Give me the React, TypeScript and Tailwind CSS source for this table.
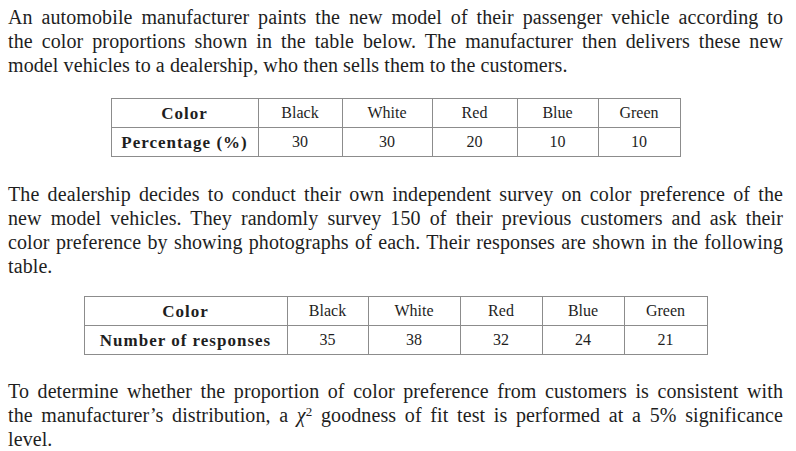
import React from 'react';

const FONT = "font-['Liberation_Serif','Times_New_Roman',serif]";

// one typeset line; every line but the last of a paragraph is stretched to the margin
const Line: React.FC<{ last?: boolean; children: React.ReactNode }> = ({ last, children }) => (
  <div className={last ? 'text-left' : 'text-justify [text-align-last:justify]'}>{children}</div>
);

interface TableProps {
  label: string;
  rowLabel: string;
  values: string[];
  widths: string[];
}

const colors = ['Black', 'White', 'Red', 'Blue', 'Green'];

const headCell = 'border border-[#8c8c8c] text-center font-bold text-[17px] tracking-[1px]';
const cell = 'border border-[#8c8c8c] text-center';

const DataTable: React.FC<TableProps> = ({ label, rowLabel, values, widths }) => (
  <table className="mx-auto border-collapse text-[16px] leading-none tracking-normal">
    <colgroup>
      {widths.map((w, i) => (
        <col key={i} className={w} />
      ))}
    </colgroup>
    <tbody>
      <tr className="h-[29px]">
        <td className={headCell}>{label}</td>
        {colors.map(c => (
          <td key={c} className={cell}>{c}</td>
        ))}
      </tr>
      <tr className="h-[29px]">
        <td className={headCell}>{rowLabel}</td>
        {values.map((v, i) => (
          <td key={i} className={cell}>{v}</td>
        ))}
      </tr>
    </tbody>
  </table>
);

export default function App() {
  return (
    <div className={`w-[796px] h-[451px] bg-white overflow-hidden ${FONT} text-[#1e1e1e]`}>
      <div className="ml-[8px] w-[775px] pt-[5px] text-[20px] leading-[24px] tracking-[0.1px]">
        {/* Paragraph 1 */}
        <div>
          <Line>An automobile manufacturer paints the new model of their passenger vehicle according to</Line>
          <Line>the color proportions shown in the table below. The manufacturer then delivers these new</Line>
          <Line last>model vehicles to a dealership, who then sells them to the customers.</Line>
        </div>

        <div className="mt-[21px]">
          <DataTable
            label="Color"
            rowLabel="Percentage (%)"
            values={['30', '30', '20', '10', '10']}
            widths={['w-[147px]', 'w-[84px]', 'w-[90px]', 'w-[85px]', 'w-[81px]', 'w-[82px]']}
          />
        </div>

        {/* Paragraph 2 */}
        <div className="mt-[25px]">
          <Line>The dealership decides to conduct their own independent survey on color preference of the</Line>
          <Line>new model vehicles. They randomly survey 150 of their previous customers and ask their</Line>
          <Line>color preference by showing photographs of each. Their responses are shown in the following</Line>
          <Line last>table.</Line>
        </div>

        <div className="mt-[18px]">
          <DataTable
            label="Color"
            rowLabel="Number of responses"
            values={['35', '38', '32', '24', '21']}
            widths={['w-[203px]', 'w-[81px]', 'w-[92px]', 'w-[82px]', 'w-[82px]', 'w-[83px]']}
          />
        </div>

        {/* Paragraph 3 */}
        <div className="mt-[24px]">
          <Line>To determine whether the proportion of color preference from customers is consistent with</Line>
          <Line>
            the manufacturer’s distribution, a <span className="italic">χ</span>
            <sup className="text-[13px] not-italic">2</sup> goodness of fit test is performed at a 5% significance
          </Line>
          <Line last>level.</Line>
        </div>
      </div>
    </div>
  );
}
